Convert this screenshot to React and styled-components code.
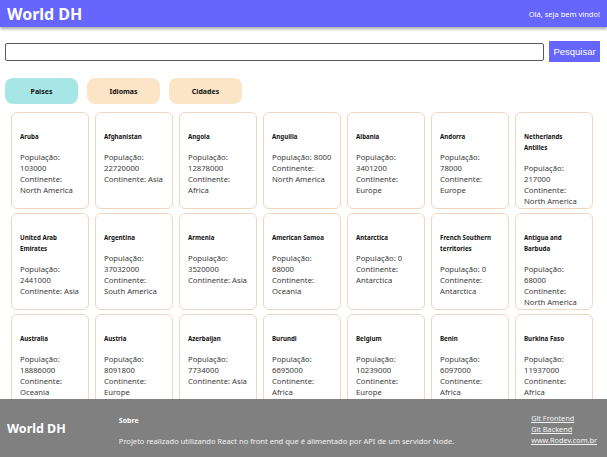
import React from "react";
import styled, { createGlobalStyle } from "styled-components";

const PURPLE = "#6666ff";

const GlobalStyle = createGlobalStyle`
  body {
    margin: 0;
    font-family: "Noto Sans", "Open Sans", sans-serif;
    background: #ffffff;
  }
`;

const Header = styled.header`
  display: flex;
  align-items: center;
  justify-content: space-between;
  height: 27px;
  padding: 0 7px;
  background: ${PURPLE};
  box-shadow: 0 2px 3px rgba(0, 0, 0, 0.35);
`;

const Logo = styled.h1`
  margin: 0;
  font-size: ${props => props.size || "16px"};
  font-weight: 700;
  color: #ffffff;
`;

const Welcome = styled.span`
  font-size: 7.5px;
  color: #ffffff;
`;

const SearchRow = styled.form`
  display: flex;
  align-items: center;
  gap: 5px;
  padding: 14px 7px 0 5px;
`;

const SearchInput = styled.input`
  flex: 1;
  height: 18px;
  box-sizing: border-box;
  border: 1.5px solid #5a5a5a;
  border-radius: 2px;
  outline: none;
`;

const SearchButton = styled.button`
  width: 51px;
  height: 21px;
  padding: 0;
  border: none;
  background: ${PURPLE};
  color: #ffffff;
  font-family: "Liberation Sans", Arial, sans-serif;
  font-size: 9.5px;
`;

const Tabs = styled.nav`
  display: flex;
  gap: 9px;
  padding: 16px 5px 0;
`;

const Tab = styled.button`
  width: 73px;
  height: 26px;
  border: none;
  border-radius: 8px;
  background: ${props => (props.active ? "#a6e6e6" : "#fbe5c6")};
  font-family: "Noto Sans", sans-serif;
  font-size: 7px;
  font-weight: 700;
  color: #111111;
`;

const Grid = styled.section`
  display: grid;
  grid-template-columns: repeat(7, 78px);
  grid-auto-rows: 97px;
  gap: 4px 6px;
  padding: 8px 11px 70px;
`;

const Card = styled.article`
  box-sizing: border-box;
  border: 1px solid #efd6c0;
  border-radius: 6px;
  padding: 18px 7px 0 8px;
  color: #3a3a3a;
`;

const Title = styled.h5`
  margin: 0 0 10px;
  font-size: 6.2px;
  line-height: 11px;
  font-weight: 700;
  color: #111111;
`;

const Info = styled.p`
  margin: 0;
  font-size: 7.7px;
  line-height: 11px;
`;

const Footer = styled.footer`
  position: fixed;
  left: 0;
  right: 0;
  bottom: 0;
  height: 58px;
  display: flex;
  align-items: center;
  padding: 0 9px 0 7px;
  background: #808080;
  color: #f2f2f2;
`;

const About = styled.div`
  flex: 1;
  display: flex;
  flex-direction: column;
  gap: 11px;
  margin-left: 53px;
  margin-top: 6px;
`;

const AboutTitle = styled.span`
  font-size: 7px;
  font-weight: 700;
  color: #ffffff;
`;

const AboutText = styled.span`
  font-size: 7.55px;
`;

const Links = styled.div`
  display: flex;
  flex-direction: column;
  margin-top: 3px;
  margin-right: 1px;
`;

const FooterLink = styled.a`
  font-size: 7.3px;
  line-height: 11px;
  color: #f2f2f2;
  text-decoration: underline;
`;

const countries = [
  ["Aruba", 103000, "North America"],
  ["Afghanistan", 22720000, "Asia"],
  ["Angola", 12878000, "Africa"],
  ["Anguilla", 8000, "North America"],
  ["Albania", 3401200, "Europe"],
  ["Andorra", 78000, "Europe"],
  ["Netherlands Antilles", 217000, "North America"],
  ["United Arab Emirates", 2441000, "Asia"],
  ["Argentina", 37032000, "South America"],
  ["Armenia", 3520000, "Asia"],
  ["American Samoa", 68000, "Oceania"],
  ["Antarctica", 0, "Antarctica"],
  ["French Southern territories", 0, "Antarctica"],
  ["Antigua and Barbuda", 68000, "North America"],
  ["Australia", 18886000, "Oceania"],
  ["Austria", 8091800, "Europe"],
  ["Azerbaijan", 7734000, "Asia"],
  ["Burundi", 6695000, "Africa"],
  ["Belgium", 10239000, "Europe"],
  ["Benin", 6097000, "Africa"],
  ["Burkina Faso", 11937000, "Africa"],
];

const App = () => {
  return (
    <>
      <GlobalStyle />
      <Header>
        <Logo>World DH</Logo>
        <Welcome>Olá, seja bem vindo!</Welcome>
      </Header>
      <SearchRow onSubmit={e => e.preventDefault()}>
        <SearchInput type="text" />
        <SearchButton type="submit">Pesquisar</SearchButton>
      </SearchRow>
      <Tabs>
        <Tab active>Paises</Tab>
        <Tab>Idiomas</Tab>
        <Tab>Cidades</Tab>
      </Tabs>
      <Grid>
        {countries.map(([name, pop, continent]) => (
          <Card key={name}>
            <Title>{name}</Title>
            <Info>População: {pop}</Info>
            <Info>Continente: {continent}</Info>
          </Card>
        ))}
      </Grid>
      <Footer>
        <Logo size="12.5px">World DH</Logo>
        <About>
          <AboutTitle>Sobre</AboutTitle>
          <AboutText>
            Projeto realizado utilizando React no front end que é alimentado por API de um servidor Node.
          </AboutText>
        </About>
        <Links>
          <FooterLink href="#">Git Frontend</FooterLink>
          <FooterLink href="#">Git Backend</FooterLink>
          <FooterLink href="#">www.Rodev.com.br</FooterLink>
        </Links>
      </Footer>
    </>
  );
};

export default App;
